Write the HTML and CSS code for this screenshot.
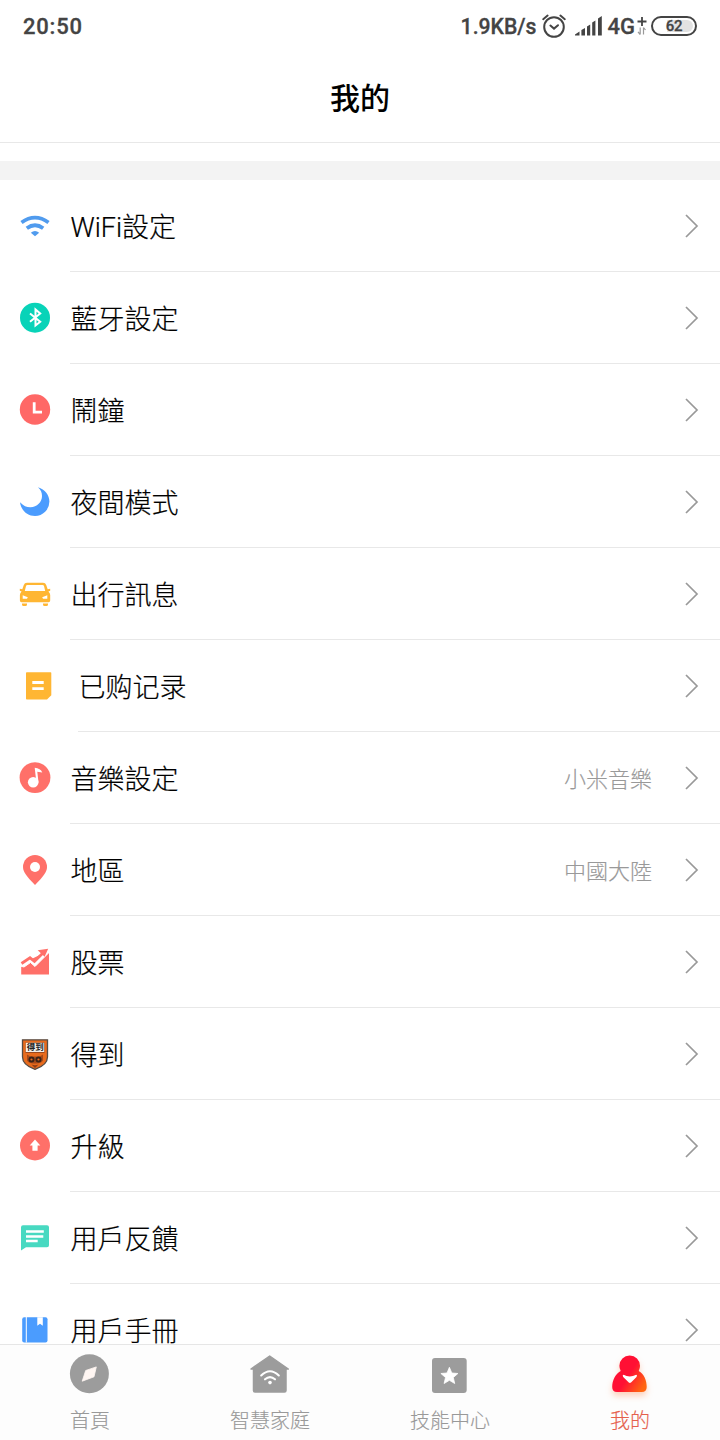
FILE: index.html
```html
<!DOCTYPE html>
<html lang="zh-Hant">
<head>
<meta charset="utf-8">
<title>我的</title>
<link rel="stylesheet" href="styles.css">
</head>
<body>
<div class="app">
  <div class="status">
    <span class="time">20:50</span>
    <div class="status-right">
      <span class="speed">1.9KB/s</span>
      <svg class="alarm" width="26" height="26" viewBox="0 0 26 26" fill="none" stroke="#444" stroke-width="2" stroke-linecap="round"><circle cx="13" cy="14" r="9.8"/><path d="M2.2 6.2 6.6 2.6M23.8 6.2 19.4 2.6M9.4 12.6 13 15.6 17 12.2"/></svg>
      <svg class="signal" width="28" height="20" viewBox="0 0 28 20" fill="#444"><path d="M0 19.5V18.5L4.5 15.5V19.5zM6.4 14l3.6-2v7.5H6.4zM12 10.500l3.200-2v11H12zM17.200 6.500l3.200-2v15h-3.200zM23 2.500 26.800 0v19.500H23z"/></svg>
      <span class="network">4G</span>
      <svg class="data" width="10" height="20" viewBox="0 0 10 20" fill="none"><path d="M0.500 5.500h9M5 1v9" stroke="#444" stroke-width="1.800"/><path d="M3.200 11.500v7M3.200 18.500 1 15.800M6.500 18.500v-7M6.500 11.500 8.500 14" stroke="#999" stroke-width="1.200"/></svg>
      <span class="battery"><span>62</span></span>
    </div>
  </div>
  <header class="header"><h1>我的</h1></header>
  <div class="band"></div>
  <main class="list">
    <div class="row">
      <svg class="icon" viewBox="0 0 40 40"><path d="M6.500 16.500Q20 6.800 33.500 16.500M11.800 22.300Q20 16.200 28.200 22.300" fill="none" stroke="#509bee" stroke-width="3.800"/><path d="M15.800 26.700Q20 23.300 24.200 26.700L20 30.300z" fill="#509bee"/></svg>
      <div class="cell"><span class="label">WiFi設定</span><svg class="chev" viewBox="0 0 14 24"><path d="M1 1 12 12 1 23"/></svg></div>
    </div>
    <div class="row">
      <svg class="icon" viewBox="0 0 40 40"><circle cx="20" cy="19.700" r="15" fill="#08d3b8"/><path d="M15 15.500 25.200 23.700 20.500 27.500V11.500L25.200 15.500 15 23.700" fill="none" stroke="#fff" stroke-width="2"/></svg>
      <div class="cell"><span class="label">藍牙設定</span><svg class="chev" viewBox="0 0 14 24"><path d="M1 1 12 12 1 23"/></svg></div>
    </div>
    <div class="row">
      <svg class="icon" viewBox="0 0 40 40"><circle cx="20" cy="19.500" r="15.200" fill="#ff6866"/><path d="M19.200 12.300V22.200H27" fill="none" stroke="#fff" stroke-width="2.800"/></svg>
      <div class="cell"><span class="label">鬧鐘</span><svg class="chev" viewBox="0 0 14 24"><path d="M1 1 12 12 1 23"/></svg></div>
    </div>
    <div class="row">
      <svg class="icon" viewBox="0 0 40 40"><path d="M23 5.200C30 7.200 34.400 13 34.400 19.600A14.500 14.500 0 0 1 20 34C12 34 6 28 5 20.200C8.500 24 12 25.400 15.500 25.300C22 25 27 20.200 27 14C27 10.500 25.800 7.800 23 5.200z" fill="#4b9cfe"/></svg>
      <div class="cell"><span class="label">夜間模式</span><svg class="chev" viewBox="0 0 14 24"><path d="M1 1 12 12 1 23"/></svg></div>
    </div>
    <div class="row">
      <svg class="icon" viewBox="0 0 40 40"><path d="M12 8.700H28Q30.500 8.700 31.200 11L32.700 15.300 35.200 14.700V16.800L33.400 17.500Q35.200 19 35.200 21V26.500Q35.200 28.300 33.500 28.300H6.500Q4.900 28.300 4.900 26.500V21Q4.900 19 6.600 17.500L4.800 16.800V14.700L7.300 15.300 8.800 11Q9.500 8.700 12 8.700z" fill="#ffb633"/><path d="M12.500 11H27.500Q28.700 11 29 12L30.200 17H9.800L11 12Q11.300 11 12.500 11zM7.700 21.200 12.800 23.300 12 24.700H7.700zM32.300 21.200 27.200 23.300 28 24.700H32.300z" fill="#fff"/><path d="M7 29.500H12V30.500Q12 32 10.500 32H8.500Q7 32 7 30.500zM28 29.500H33V30.500Q33 32 31.500 32H29.500Q28 32 28 30.500z" fill="#ffb633"/></svg>
      <div class="cell"><span class="label">出行訊息</span><svg class="chev" viewBox="0 0 14 24"><path d="M1 1 12 12 1 23"/></svg></div>
    </div>
    <div class="row inset">
      <svg class="icon" viewBox="0 0 40 40"><path d="M3.800 6.300H27.500Q28.300 6.300 28.300 7.100V29.200L24 33.600H3.800Q3 33.600 3 32.800V7.100Q3 6.300 3.800 6.300z" fill="#ffb633"/><path d="M9.300 16.500H20.700M9.300 22.700H20.700" stroke="#fff" stroke-width="2.800"/></svg>
      <div class="cell"><span class="label" lang="zh-Hans">已购记录</span><svg class="chev" viewBox="0 0 14 24"><path d="M1 1 12 12 1 23"/></svg></div>
    </div>
    <div class="row">
      <svg class="icon" viewBox="0 0 40 40"><circle cx="20" cy="19.600" r="15.400" fill="#ff7069"/><circle cx="18.200" cy="24.200" r="5.300" fill="#fff"/><path d="M21.400 24.500 19.700 9.800Q25.500 10.200 27.300 14.500L22.300 13.800 23.500 24.200z" fill="#fff"/></svg>
      <div class="cell"><span class="label">音樂設定</span><span class="value">小米音樂</span><svg class="chev" viewBox="0 0 14 24"><path d="M1 1 12 12 1 23"/></svg></div>
    </div>
    <div class="row">
      <svg class="icon" viewBox="0 0 40 40"><path d="M20 5A12 12 0 0 1 32 17C32 22 28 27 20 34.900C12 27 8 22 8 17A12 12 0 0 1 20 5z" fill="#ff7069"/><circle cx="20" cy="17" r="5" fill="#fff"/></svg>
      <div class="cell"><span class="label">地區</span><span class="value">中國大陸</span><svg class="chev" viewBox="0 0 14 24"><path d="M1 1 12 12 1 23"/></svg></div>
    </div>
    <div class="row">
      <svg class="icon" viewBox="0 0 40 40"><path d="M6.200 22 34 8.500V32.600H6.200z" fill="#ff7069"/><path d="M5 21.500 15.200 15.500 19.600 19 30 9.500 33.500 8V11L20 24.500 15.500 20.500 9 25 5 24z" fill="#fff" stroke="#fff"/><path d="M6.500 21.500 15 15.800 19.500 19.300 28.500 10.500" fill="none" stroke="#ff7069" stroke-width="2.800"/><path d="M22.700 8.300 33.200 6.800 29.600 14.800z" fill="#ff7069"/></svg>
      <div class="cell"><span class="label">股票</span><svg class="chev" viewBox="0 0 14 24"><path d="M1 1 12 12 1 23"/></svg></div>
    </div>
    <div class="row">
      <svg class="icon" viewBox="0 0 40 40"><path d="M7.500 5.800H32.500V23Q32.500 31 20 35.400Q7.500 31 7.500 23z" fill="#e86b1d" stroke="#554c45" stroke-width="1.300"/><path d="M10.500 8.500H29.500V19H10.500z" fill="#9b4a1e"/><path d="M10.800 8.800H29.200V18H10.800z" fill="#f5f0ea"/><text class="crest" x="20.200" y="16.300" text-anchor="middle">得到</text><path d="M12 20.500 15.500 22.500H24.500L28 20.500V26.500Q26 30 20 29.500Q14 30 12 26.500z" fill="#a3491a"/><circle cx="16.500" cy="25.500" r="3" fill="#3a2318"/><circle cx="23.500" cy="25.500" r="3" fill="#3a2318"/><circle cx="16.500" cy="25.500" r="1.100" fill="#e86b1d"/><circle cx="23.500" cy="25.500" r="1.100" fill="#e86b1d"/><path d="M16.500 30.500Q20 32 23.500 30.500L20 34z" fill="#8b3d17"/></svg>
      <div class="cell"><span class="label">得到</span><svg class="chev" viewBox="0 0 14 24"><path d="M1 1 12 12 1 23"/></svg></div>
    </div>
    <div class="row">
      <svg class="icon" viewBox="0 0 40 40"><circle cx="20" cy="19.500" r="15" fill="#ff7069"/><path d="M20 13.500 25.300 19.400H22.600V24.800H17.400V19.400H14.700z" fill="#fff"/></svg>
      <div class="cell"><span class="label">升級</span><svg class="chev" viewBox="0 0 14 24"><path d="M1 1 12 12 1 23"/></svg></div>
    </div>
    <div class="row">
      <svg class="icon" viewBox="0 0 40 40"><path d="M8 7.300H32Q34 7.300 34 9.300V27.300Q34 29.300 32 29.300H11L6 32.500V9.300Q6 7.300 8 7.300z" fill="#48d9c1"/><path d="M11 13.600H28.800M11 18.400H28.300M11 22.900H22.700" stroke="#fff" stroke-width="2.500"/></svg>
      <div class="cell"><span class="label">用戶反饋</span><svg class="chev" viewBox="0 0 14 24"><path d="M1 1 12 12 1 23"/></svg></div>
    </div>
    <div class="row">
      <svg class="icon" viewBox="0 0 40 40"><rect x="7.200" y="7.200" width="25.300" height="25.200" rx="2" fill="#4b9cfe"/><path d="M11.300 7V32.500" stroke="#fff" stroke-width="1"/><path d="M22.300 7.200H27.800V15.700L25 13.800 22.300 15.700z" fill="#fff"/></svg>
      <div class="cell"><span class="label">用戶手冊</span><svg class="chev" viewBox="0 0 14 24"><path d="M1 1 12 12 1 23"/></svg></div>
    </div>
  </main>
  <nav class="tabs">
    <div class="tab">
      <svg viewBox="0 0 60 60"><circle cx="29.400" cy="28.800" r="19.500" fill="#9c9c9c"/><path d="M36.300 21.900 34 31.800 22.200 36.200 25.700 25.500z" fill="#fff6f2" stroke="#fff6f2" stroke-width=".8" stroke-linejoin="round"/></svg>
      <span>首頁</span>
    </div>
    <div class="tab">
      <svg viewBox="0 0 60 60"><path d="M29.700 11 48.300 24H46V45.500Q46 47 44.500 47H15Q13.500 47 13.500 45.500V24H11z" fill="#9c9c9c" stroke="#9c9c9c" stroke-width="1.500" stroke-linejoin="round"/><path d="M21.200 30.500Q30 22 38.800 30.500M25 34.300Q30 29.800 35 34.300" fill="none" stroke="#fff" stroke-width="2.100" stroke-linecap="round"/><circle cx="30" cy="37.600" r="1.800" fill="#fff"/></svg>
      <span>智慧家庭</span>
    </div>
    <div class="tab">
      <svg viewBox="0 0 60 60"><rect x="12" y="13" width="34.700" height="35" rx="3" fill="#9c9c9c"/><path d="M29.400 22.300 31.800 28 37.900 28.500 33.300 32.500 34.700 38.500 29.400 35.300 24.100 38.500 25.500 32.500 20.900 28.500 27 28z" fill="#fff" stroke="#fff" stroke-width=".8" stroke-linejoin="round"/></svg>
      <span>技能中心</span>
    </div>
    <div class="tab active">
      <svg viewBox="0 0 60 60"><defs><linearGradient id="me" x1=".5" y1=".5" x2=".95" y2=".8"><stop offset="0" stop-color="#ff1034"/><stop offset="1" stop-color="#ff6610"/></linearGradient></defs><path class="me" d="M29.700 10.500A10.300 10.300 0 0 1 40 20.800Q40 23.500 38.700 26C44 29 46.700 35 46.700 42Q46.700 47 41.700 47H17Q12.200 47 12.200 42C12.200 35 15.500 29 20.700 26Q19.400 23.500 19.400 20.800A10.300 10.300 0 0 1 29.700 10.500z" fill="url(#me)"/><path d="M23.500 29.800Q29.700 33 36.200 29.800Q37.800 30.400 36.500 32L31 37.500Q29.900 38.300 28.800 37.500L23.200 32Q22 30.400 23.500 29.800z" fill="#fff"/></svg>
      <span>我的</span>
    </div>
  </nav>
</div>
</body>
</html>
```
FILE: styles.css
```css
* { box-sizing: border-box; }
body {
  margin: 0;
  background: #fff;
  color: #000;
  font-family: Roboto, "Noto Sans CJK TC", sans-serif;
}
[lang="zh-Hans"] { font-family: Roboto, "Noto Sans CJK SC", sans-serif; }
.app {
  width: 720px;
  height: 1440px;
  display: flex;
  flex-direction: column;
  overflow: hidden;
}
.status {
  flex: none;
  height: 52px;
  padding: 0 23px;
  display: flex;
  align-items: center;
  justify-content: space-between;
  color: #444;
  font-size: 22px;
  font-weight: 500;
  -webkit-text-stroke: 0.3px #444;
}
.time { letter-spacing: 0.8px; }
.speed { font-size: 21.2px; }
.status-right { display: flex; align-items: center; }
.alarm { margin-left: 4px; }
.signal { margin-left: 8px; }
.network { margin-left: 5px; }
.data { margin-left: 2px; }
.battery {
  margin-left: 4px;
  width: 46px;
  height: 20px;
  padding: 2px;
  border: 2px solid #444;
  border-radius: 10px;
  display: flex;
}
.battery span {
  flex: 1;
  border-radius: 7px;
  background: linear-gradient(90deg, #fff 12px, #e2e2e2 12px);
  font-size: 15px;
  line-height: 13px;
  letter-spacing: -0.3px;
  text-align: center;
}
.header {
  flex: none;
  height: 91px;
  padding-bottom: 3px;
  border-bottom: 1px solid #e8e8e8;
  display: flex;
  align-items: center;
  justify-content: center;
}
.header h1 {
  margin: 0;
  font-size: 30px;
  font-weight: 500;
}
.band {
  flex: none;
  height: 19px;
  margin-top: 18px;
  background: #f3f3f3;
}
.list {
  flex: 1;
  min-height: 0;
  overflow: hidden;
}
.row {
  height: 92px;
  padding-left: 15px;
  display: flex;
  align-items: center;
}
.row.inset { padding-left: 23px; }
.icon {
  flex: none;
  width: 40px;
  height: 40px;
}
.cell {
  flex: 1;
  height: 92px;
  margin-left: 15px;
  padding-right: 21px;
  border-bottom: 1px solid #e8e8e8;
  display: flex;
  align-items: center;
}
.label {
  flex: 1;
  padding-left: 0.5px;
  font-size: 27px;
  font-weight: 300;
  -webkit-text-stroke: 0.2px currentColor;
}
.value {
  margin-right: 33px;
  padding-bottom: 2px;
  color: #999;
  font-size: 22px;
  font-weight: 300;
  -webkit-text-stroke: 0.15px currentColor;
}
.chev {
  width: 14px;
  height: 24px;
  fill: none;
  stroke: #999;
  stroke-width: 1.7;
}
.crest {
  font-family: "Noto Sans CJK TC", sans-serif;
  font-size: 8.5px;
  font-weight: 700;
  fill: #222;
}
.tabs {
  flex: none;
  height: 96px;
  border-top: 1px solid #e6e6e6;
  background: #fdfdfd;
  display: flex;
}
.tab {
  flex: 1;
  display: flex;
  flex-direction: column;
  align-items: center;
  color: #999;
  font-size: 20px;
  font-weight: 300;
  line-height: 32px;
  -webkit-text-stroke: 0.15px currentColor;
}
.tab svg { width: 60px; height: 60px; }
.me { filter: drop-shadow(0 4px 3px rgba(255, 110, 40, 0.3)); }
.active { color: #e5604c; }
```
